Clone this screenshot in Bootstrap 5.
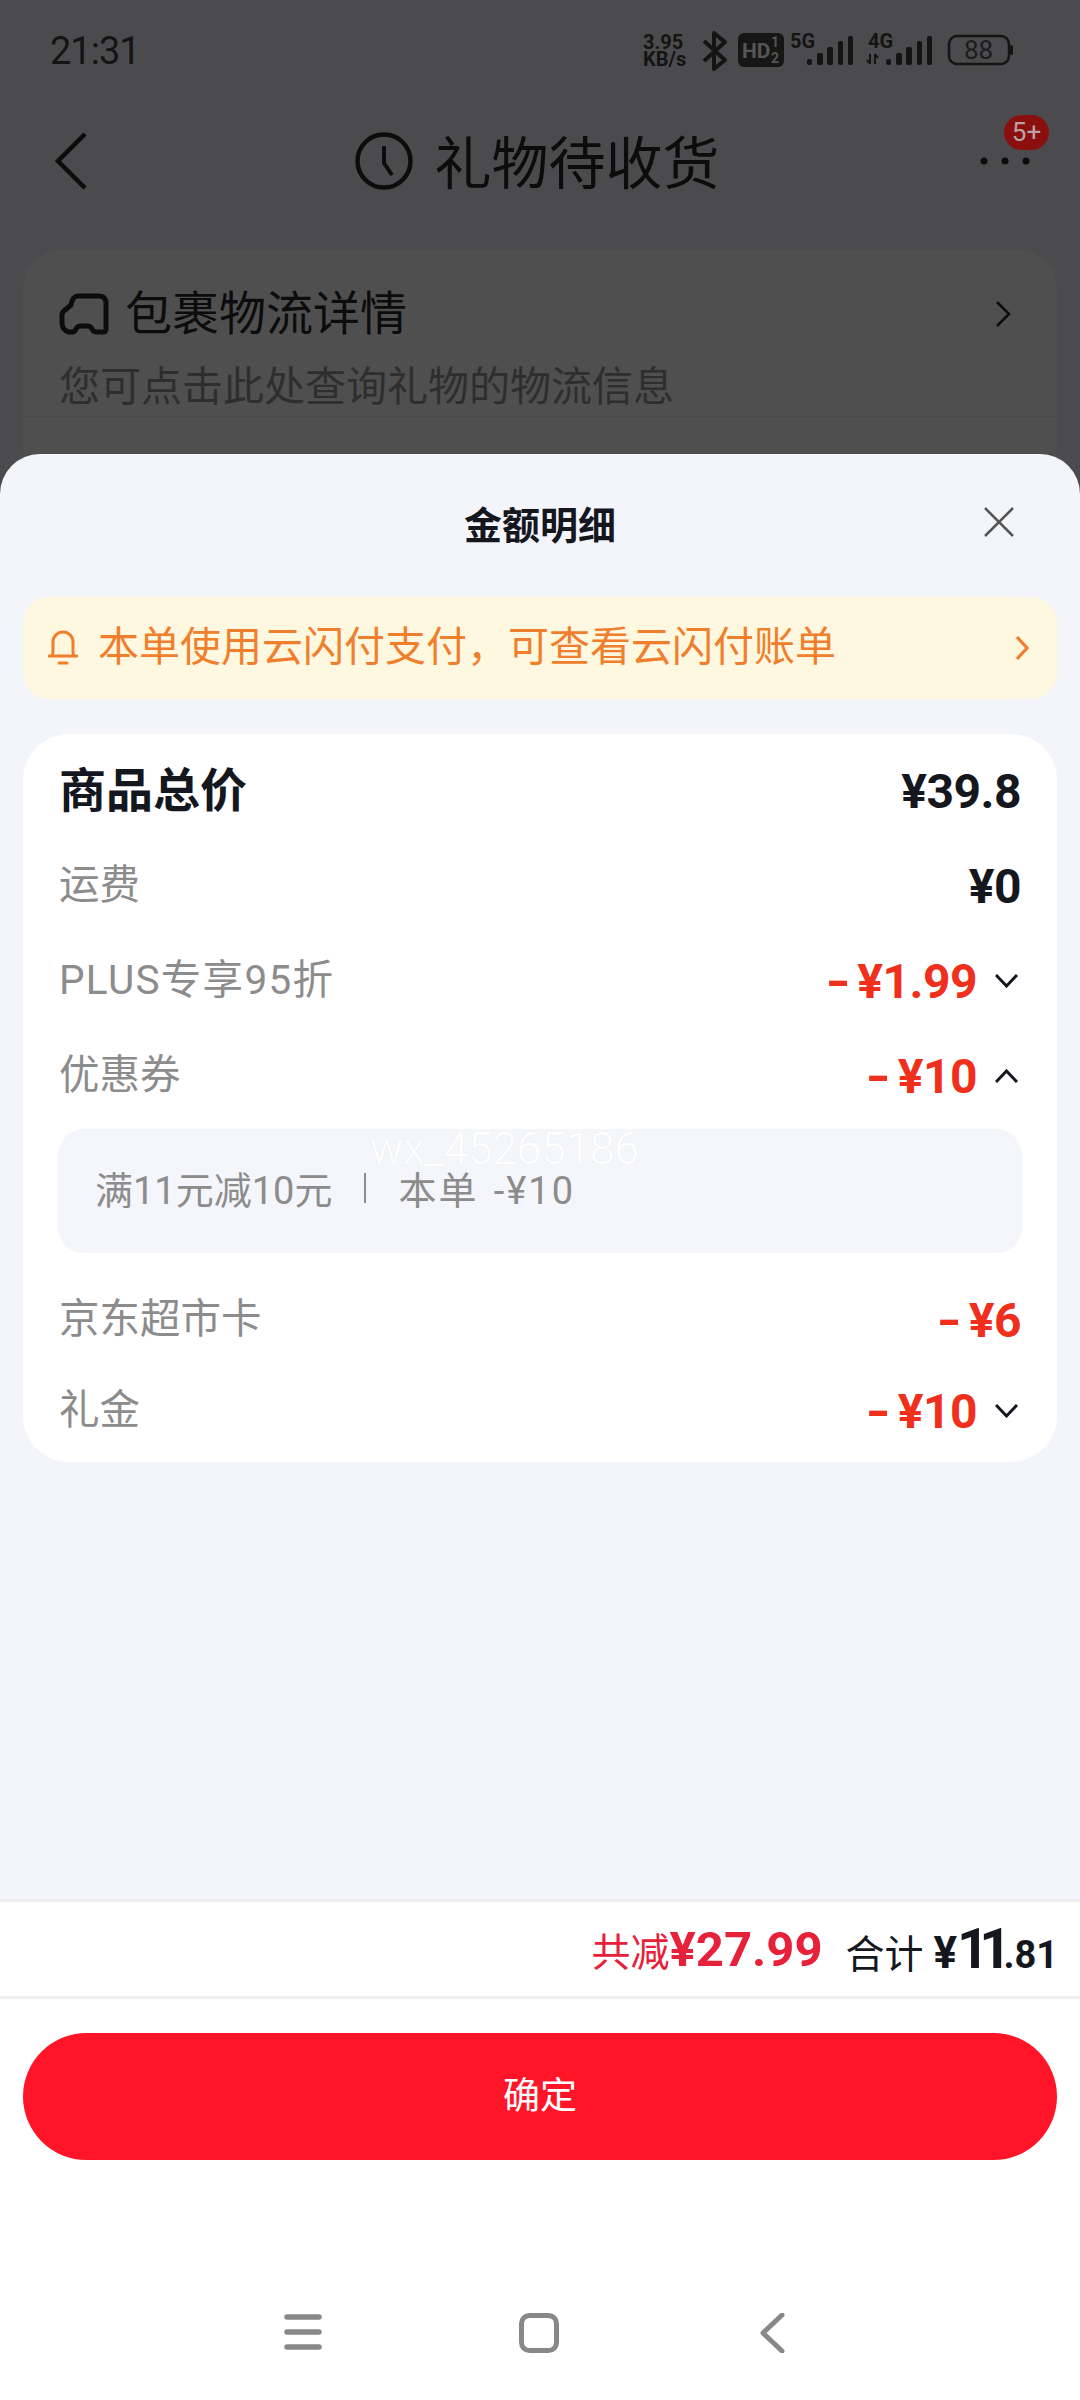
<!DOCTYPE html>
<html lang="zh-CN">
<head>
    <meta charset="UTF-8">
    <title>金额明细</title>
    <meta name="viewport" content="width=device-width, initial-scale=1">
    <link href="https://cdn.jsdelivr.net/npm/bootstrap@5.3.0/dist/css/bootstrap.min.css" rel="stylesheet">
    <style>
        body { width: 1080px; height: 2400px; overflow: hidden; background: #4b4b4d; font-family: Roboto, "Noto Sans CJK SC", sans-serif; color: #15171f; position: relative; }
        .stat-bar { height: 102px; padding: 0 67px 0 50px; color: #141414; }
        .stat-time { font-size: 38px; line-height: 1; letter-spacing: -1px; }
        .stat-speed { width: 50px; font-size: 20px; line-height: 17px; font-weight: 700; }
        .top-nav { height: 117px; padding: 0 50px 0 54px; }
        .top-title { font-size: 57px; line-height: 1; color: #0c0c0c; gap: 22px; margin-left: 6px; }
        .top-title span { padding-top: 7px; }
        .top-more { width: 50px; height: 10px; }
        .msg-dot { top: -41px; right: -19px; width: 45px; height: 35px; padding: 0; font-size: 26px; font-weight: 400; line-height: 35px; background: #8b0f0f; color: #b9a3a3; }
        .ship-box { margin: 30px 23px 0; height: 240px; padding: 37px 46px 0 36px; background: #4f4f50; border-radius: 40px; }
        .ship-title { font-size: 47px; line-height: 56px; color: #0c0c0c; }
        .ship-sub { margin-top: 20px; font-size: 41px; line-height: 50px; color: #2e2e2f; }
        .ship-line { margin: 4px -46px 0 -36px; height: 1px; background: #4a4a4b; }
        .sheet { left: 0; right: 0; top: 454px; bottom: 0; background: #f3f5fa; border-radius: 40px 40px 0 0; }
        .sheet-head { height: 143px; }
        .sheet-title { font-size: 38px; font-weight: 700; line-height: 1; }
        .sheet-close { right: 65px; top: 52px; }
        .notice { margin: 0 23px; height: 102px; padding: 0 28px 0 25px; background: #fff8e0; border-radius: 26px; color: #f07f2d; font-size: 41px; }
        .notice-text { gap: 20px; }
        .price-box { margin: 35px 23px 0; height: 728px; padding: 9px 36px 9px; background: #fff; border-radius: 46px; }
        .fee-row { height: 95px; }
        .fee-row.low { height: 91px; }
        .fee-name { font-size: 40.5px; color: #8c8c8c; line-height: 1; }
        .fee-name.big { font-size: 47px; font-weight: 700; color: #15171f; }
        .fee-plus { letter-spacing: 1.3px; }
        .fee-val { font-size: 48px; font-weight: 700; line-height: 1; letter-spacing: -.5px; padding-top: 2px; }
        .cut { color: #f0301c; }
        .cut i { display: inline-block; font-style: normal; margin-right: 7px; transform: scaleX(1.35); transform-origin: right; }
        .fee-arrow { width: 23px; margin: 0 3px 0 18px; }
        .coupon { height: 124px; margin: 6px -1px 21px; padding: 0 37px; background: #f4f6fb; border-radius: 26px; color: #8c8c8c; font-size: 38px; position: relative; }
        .coupon-sep { width: 2px; height: 30px; background: #8c8c8c; margin: -6px 32px 0; }
        .coupon-off { letter-spacing: 2px; word-spacing: 4px; }
        .wmark { left: 312px; top: -2px; font-size: 44px; line-height: 44px; color: #fff; font-weight: 300; text-shadow: 0 0 1px #e4e6ea; }
        .sheet-foot { margin-top: auto; background: #fff; }
        .sum-bar { height: 100px; padding: 0 22px 0 0; border-top: 3px solid #eceef2; border-bottom: 3px solid #eceef2; line-height: 1; }
        .sum-cut { color: #e8213a; font-size: 39px; }
        .sum-cut b { font-size: 49px; }
        .sum-all { margin-left: 23px; font-size: 39px; }
        .sum-all b { font-size: 44px; margin-left: 10px; }
        .sum-all b.yuan { font-size: 56px; margin: 0; letter-spacing: -10px; }
        .sum-all b.fen { font-size: 38px; margin: 0 0 0 2px; }
        .ok-btn { display: block; width: 1034px; height: 127px; margin: 34px 23px 0; background: #ff1428; border: 0; color: #fff; font-size: 37px; line-height: 127px; padding: 0; }
        .sys-nav { height: 240px; padding: 153px 0 0 284px; gap: 197px; }
        .sys-back { margin-left: 3px; }
    </style>
</head>
<body>
    <div class="stat-bar d-flex align-items-center justify-content-between">
        <span class="stat-time">21:31</span>
        <div class="d-flex align-items-center">
            <div class="stat-speed">3.95<br>KB/s</div>
            <svg class="ms-2" width="312" height="44" viewBox="0 -2 312 44">
                <path d="M3 10 24 29 13 38V2l11 9L3 30" fill="none" stroke="#141414" stroke-width="4" stroke-linejoin="round"/>
                <rect x="37" y="2" width="46" height="34" rx="6" fill="#161616"/>
                <text x="41" y="27" font-family="Roboto" font-size="21" font-weight="700" fill="#555">HD</text>
                <text x="70" y="16" font-family="Roboto" font-size="14" font-weight="700" fill="#555">1</text>
                <text x="70" y="32" font-family="Roboto" font-size="14" font-weight="700" fill="#555">2</text>
                <text x="89" y="17" font-family="Roboto" font-size="20" font-weight="700" fill="#141414">5G</text>
                <rect x="106" y="28" width="5" height="6" rx="2" fill="#141414"/>
                <rect x="116" y="22" width="6" height="12" rx="2" fill="#141414"/>
                <rect x="126" y="16" width="6" height="18" rx="2" fill="#141414"/>
                <rect x="137" y="10" width="5" height="24" rx="2" fill="#141414"/>
                <rect x="147" y="5" width="5" height="29" rx="2" fill="#141414"/>
                <text x="167" y="17" font-family="Roboto" font-size="20" font-weight="700" fill="#141414">4G</text>
                <path d="M169 23v10M166 29l3 4M174 33V23M177 27l-3-4" stroke="#141414" stroke-width="2" fill="none"/>
                <rect x="185" y="28" width="5" height="6" rx="2" fill="#141414"/>
                <rect x="195" y="22" width="6" height="12" rx="2" fill="#141414"/>
                <rect x="205" y="16" width="6" height="18" rx="2" fill="#141414"/>
                <rect x="216" y="10" width="5" height="24" rx="2" fill="#141414"/>
                <rect x="226" y="5" width="5" height="29" rx="2" fill="#141414"/>
                <rect x="248" y="5" width="60" height="28" rx="8" fill="none" stroke="#141414" stroke-width="2.5"/>
                <text x="263" y="28" font-family="Roboto" font-size="26" fill="#1c1c1c">88</text>
                <rect x="309" y="14" width="3" height="10" rx="1.5" fill="#141414"/>
            </svg>
        </div>
    </div>

    <div class="top-nav position-relative d-flex align-items-center justify-content-between">
        <svg width="34" height="58" viewBox="0 0 34 58"><path d="M31 2 4 29l27 27" fill="none" stroke="#0c0c0c" stroke-width="4.5"/></svg>
        <div class="d-flex align-items-center top-title">
            <svg width="58" height="58" viewBox="0 0 58 58"><circle cx="29" cy="29" r="26.5" fill="none" stroke="#0c0c0c" stroke-width="4.5"/><path d="M29 14v17l8 12" fill="none" stroke="#0c0c0c" stroke-width="4"/></svg>
            <span>礼物待收货</span>
        </div>
        <div class="position-relative top-more">
            <svg class="d-block" width="50" height="10" viewBox="0 0 50 10"><circle cx="4" cy="5" r="3.500" fill="#0c0c0c"/><circle cx="25" cy="5" r="3.500" fill="#0c0c0c"/><circle cx="46" cy="5" r="3.500" fill="#0c0c0c"/></svg>
            <span class="badge rounded-pill position-absolute msg-dot">5+</span>
        </div>
    </div>

    <div class="ship-box">
        <div class="d-flex align-items-center justify-content-between">
            <div class="d-flex align-items-center ship-title gap-3">
                <svg width="50" height="42" viewBox="0 0 50 42"><path d="M19 3H40Q46 3 47 9V36Q47 39 44 39H38Q34 39 33 36 32 33 28 33H22Q18 33 17 36 16 39 13 39H10Q3 37 3 30V22Q3 19 6 17L12 12 13 8Q15 3 19 3Z" fill="none" stroke="#0c0c0c" stroke-width="5" stroke-linejoin="round"/></svg>
                <span>包裹物流详情</span>
            </div>
            <svg width="16" height="26" viewBox="0 0 16 26"><path d="M2 1l12 12L2 25" fill="none" stroke="#0c0c0c" stroke-width="2.5"/></svg>
        </div>
        <div class="ship-sub">您可点击此处查询礼物的物流信息</div>
        <div class="ship-line"></div>
    </div>

    <div class="sheet position-absolute d-flex flex-column">
        <div class="sheet-head d-flex align-items-center justify-content-center position-relative">
            <span class="sheet-title">金额明细</span>
            <svg class="position-absolute sheet-close" width="32" height="32" viewBox="0 0 32 32"><path d="M2 2l28 28M30 2 2 30" stroke="#555" stroke-width="2.5" fill="none"/></svg>
        </div>
        <div class="notice d-flex align-items-center justify-content-between">
            <div class="d-flex align-items-center notice-text">
                <svg width="30" height="36" viewBox="0 0 30 36"><path d="M1 26h28M3.500 26c1.500-1 1.500-3 1.500-5v-9a10 10 0 0 1 20 0v9c0 2 0 4 1.500 5" fill="none" stroke="#f07f2d" stroke-width="3" stroke-linecap="round"/><path d="M11 33h8" stroke="#f07f2d" stroke-width="3" stroke-linecap="round"/></svg>
                <span>本单使用云闪付支付，可查看云闪付账单</span>
            </div>
            <svg width="14" height="26" viewBox="0 0 14 26"><path d="M2 2l10 11L2 24" fill="none" stroke="#f07f2d" stroke-width="3.2"/></svg>
        </div>

        <div class="price-box">
            <div class="fee-row d-flex align-items-center justify-content-between">
                <span class="fee-name big">商品总价</span>
                <span class="fee-val">¥39.8</span>
            </div>
            <div class="fee-row d-flex align-items-center justify-content-between">
                <span class="fee-name">运费</span>
                <span class="fee-val">¥0</span>
            </div>
            <div class="fee-row d-flex align-items-center justify-content-between">
                <span class="fee-name fee-plus">PLUS专享95折</span>
                <div class="d-flex align-items-center">
                    <span class="fee-val cut"><i>-</i>¥1.99</span>
                    <svg class="fee-arrow" height="14" viewBox="0 0 23 14"><path d="M1 1l10.500 11L22 1" fill="none" stroke="#15171f" stroke-width="3"/></svg>
                </div>
            </div>
            <div class="fee-row d-flex align-items-center justify-content-between">
                <span class="fee-name">优惠券</span>
                <div class="d-flex align-items-center">
                    <span class="fee-val cut"><i>-</i>¥10</span>
                    <svg class="fee-arrow" height="14" viewBox="0 0 23 14"><path d="M1 13 11.500 2 22 13" fill="none" stroke="#15171f" stroke-width="3"/></svg>
                </div>
            </div>
            <div class="coupon d-flex align-items-center">
                <span>满11元减10元</span>
                <span class="coupon-sep"></span>
                <span class="coupon-off">本单 -¥10</span>
                <span class="wmark position-absolute">wx_45265186</span>
            </div>
            <div class="fee-row low d-flex align-items-center justify-content-between">
                <span class="fee-name">京东超市卡</span>
                <span class="fee-val cut"><i>-</i>¥6</span>
            </div>
            <div class="fee-row low d-flex align-items-center justify-content-between">
                <span class="fee-name">礼金</span>
                <div class="d-flex align-items-center">
                    <span class="fee-val cut"><i>-</i>¥10</span>
                    <svg class="fee-arrow" height="14" viewBox="0 0 23 14"><path d="M1 1l10.500 11L22 1" fill="none" stroke="#15171f" stroke-width="3"/></svg>
                </div>
            </div>
        </div>

        <div class="sheet-foot">
            <div class="sum-bar d-flex align-items-center justify-content-end">
                <span class="sum-cut">共减<b>¥27.99</b></span>
                <span class="sum-all">合计<b>¥</b><b class="yuan">11</b><b class="fen">.81</b></span>
            </div>
            <button type="button" class="btn rounded-pill ok-btn">确定</button>
            <div class="sys-nav d-flex align-items-start">
                <svg width="38" height="38" viewBox="0 0 38 38"><path d="M3 4h32M3 19h32M3 34h32" stroke="#888" stroke-width="5.500" stroke-linecap="round"/></svg>
                <svg width="40" height="40" viewBox="0 0 40 40"><rect x="2.500" y="2.500" width="35" height="35" rx="8" fill="none" stroke="#888" stroke-width="5"/></svg>
                <svg class="sys-back" width="26" height="40" viewBox="0 0 26 40"><path d="M23 2 4 20l19 18" fill="none" stroke="#888" stroke-width="5" stroke-linecap="round" stroke-linejoin="round"/></svg>
            </div>
        </div>
    </div>
    <script src="https://cdn.jsdelivr.net/npm/bootstrap@5.3.0/dist/js/bootstrap.bundle.min.js"></script>
</body>
</html>
